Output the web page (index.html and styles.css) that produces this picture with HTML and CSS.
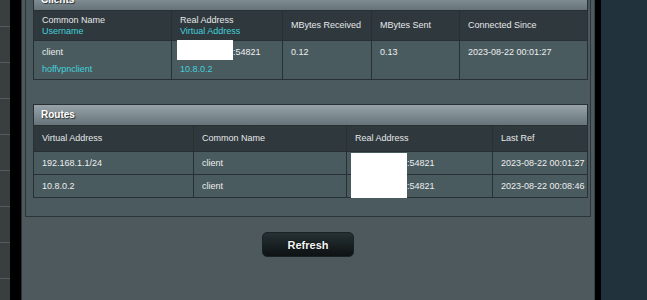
FILE: index.html
```html
<!DOCTYPE html>
<html>
<head>
<meta charset="utf-8">
<link rel="stylesheet" href="styles.css">
</head>
<body>
<div class="screen">
  <div class="sidebar">
    <div class="tick"></div><div class="tick"></div><div class="tick"></div>
    <div class="tick"></div><div class="tick"></div><div class="tick"></div>
    <div class="tick"></div><div class="tick"></div><div class="tick"></div>
  </div>
  <div class="gutter"></div>
  <main class="panel">
    <div class="box">
      <section class="tbl clients">
        <div class="tbl-title">Clients</div>
        <div class="grid">
          <div class="th"><span>Common Name</span><span class="sub">Username</span></div>
          <div class="th"><span>Real Address</span><span class="sub">Virtual Address</span></div>
          <div class="th"><span>MBytes Received</span></div>
          <div class="th"><span>MBytes Sent</span></div>
          <div class="th"><span>Connected Since</span></div>
          <div class="td"><div>client</div><div class="line2 sub">hoffvpnclient</div></div>
          <div class="td"><div class="ip"><span class="redact"></span>:54821</div><div class="line2 sub">10.8.0.2</div></div>
          <div class="td"><div>0.12</div></div>
          <div class="td"><div>0.13</div></div>
          <div class="td"><div>2023-08-22 00:01:27</div></div>
        </div>
      </section>
      <section class="tbl routes">
        <div class="tbl-title">Routes</div>
        <div class="grid">
          <div class="th"><span>Virtual Address</span></div>
          <div class="th"><span>Common Name</span></div>
          <div class="th"><span>Real Address</span></div>
          <div class="th"><span>Last Ref</span></div>
          <div class="td">192.168.1.1/24</div>
          <div class="td">client</div>
          <div class="td"><div class="ip"><span class="redact"></span>:54821</div></div>
          <div class="td">2023-08-22 00:01:27</div>
          <div class="td">10.8.0.2</div>
          <div class="td">client</div>
          <div class="td"><div class="ip">:54821</div></div>
          <div class="td">2023-08-22 00:08:46</div>
        </div>
      </section>
    </div>
    <div class="actions">
      <button class="btn" type="button">Refresh</button>
    </div>
  </main>
  <div class="gutter-right"></div>
  <div class="right-pane"></div>
</div>
</body>
</html>
```

FILE: styles.css
```css
html, body {
  margin: 0;
  padding: 0;
}

body {
  font-family: "Liberation Sans", Arial, sans-serif;
  font-size: 9px;
  color: #eceeee;
  background: #000;
  overflow: hidden;
}

.screen {
  display: flex;
  width: 647px;
  height: 300px;
  overflow: hidden;
}

.sidebar {
  flex: none;
  width: 10px;
  background: #393e3f;
  display: flex;
  flex-direction: column;
  overflow: hidden;
}

.tick {
  flex: none;
  height: 35px;
  border-bottom: 1px solid #565b5d;
}

.tick:first-child {
  margin-top: -9px;
}

.gutter {
  flex: none;
  width: 11px;
  background: #000;
}

.panel {
  flex: none;
  width: 572px;
  border-left: 1px solid #2b3336;
  border-right: 1px solid #3b4447;
  background: #4e595d;
  display: flex;
  flex-direction: column;
  overflow: hidden;
}

.box {
  margin: -20px 3px 0;
  border: 1px solid #2d3538;
  background: #4b5a5e;
  padding: 8px 2px 18px 7px;
}

.tbl {
  border: 1px solid #283033;
  background: #4a5b5f;
}

.tbl + .tbl {
  margin-top: 24px;
}

.tbl-title {
  height: 20px;
  border-bottom: 1px solid #283033;
  background: linear-gradient(#97a3a8, #66747a);
  color: #fff;
  font-weight: bold;
  font-size: 10px;
  line-height: 20px;
  padding-left: 7px;
  text-shadow: 1px 1px 1px #2a2f31;
}

.grid {
  display: grid;
}

.clients .grid {
  grid-template-columns: 138px 111px 89px 88px 127px;
}

.routes .grid {
  grid-template-columns: 160px 153px 146px 94px;
}

.th,
.td {
  box-sizing: border-box;
  padding: 0 8px;
  border-right: 1px solid #283033;
  white-space: nowrap;
}

.clients .th:nth-child(5n),
.clients .td:nth-child(5n) {
  border-right: none;
}

.routes .th:nth-child(4n),
.routes .td:nth-child(4n) {
  border-right: none;
}

.th {
  background: #2f383d;
  color: #e6e8e9;
  border-bottom: 1px solid #283033;
  display: flex;
  flex-direction: column;
  justify-content: center;
  line-height: 11px;
}

.clients .th {
  height: 30px;
}

.routes .th {
  height: 26px;
}

.sub {
  color: #42d0d9;
}

.clients .td {
  height: 38px;
  padding-top: 4px;
  line-height: 14px;
}

.line2 {
  margin-top: 3px;
}

.routes .td {
  height: 23px;
  border-bottom: 1px solid #283033;
  line-height: 22px;
}

.routes .td:nth-child(n+9) {
  height: 22px;
  border-bottom: none;
}

.ip {
  position: relative;
}

.clients .ip {
  padding-left: 53px;
}

.routes .ip {
  padding-left: 52px;
}

.redact {
  position: absolute;
  background: #fff;
  width: 56px;
}

.clients .redact {
  left: -3px;
  top: -5px;
  height: 20px;
}

.routes .redact {
  left: -4px;
  top: 1px;
  height: 45px;
}

.actions {
  display: flex;
  justify-content: center;
  padding-top: 15px;
}

.btn {
  box-sizing: border-box;
  width: 92px;
  height: 25px;
  margin: 0;
  padding: 0;
  border: 1px solid #1b2224;
  border-radius: 5px;
  background: linear-gradient(#253134, #0e1213);
  color: #f4f4f4;
  font-family: "Liberation Sans", Arial, sans-serif;
  font-weight: bold;
  font-size: 11px;
  text-shadow: 0 0 2px #000;
  cursor: pointer;
}

.gutter-right {
  flex: none;
  width: 6px;
  background: #000;
}

.right-pane {
  flex: none;
  width: 46px;
  background: #22323c;
}
```
